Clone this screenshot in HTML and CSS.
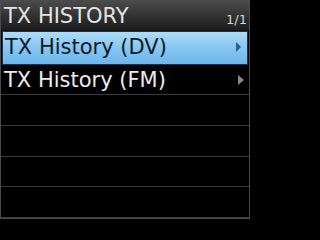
FILE: index.html
```html
<!DOCTYPE html>
<html>
<head>
<meta charset="utf-8">
<link rel="stylesheet" href="styles.css">
</head>
<body>
<div class="screen">
  <div class="header">
    <span class="title">TX HISTORY</span>
    <span class="page">1/1</span>
  </div>
  <div class="list">
    <div class="row selected"><span class="label">TX History (DV)</span><span class="arrow"></span></div>
    <div class="row"><span class="label">TX History (FM)</span><span class="arrow"></span></div>
    <div class="row"></div>
    <div class="row"></div>
    <div class="row"></div>
    <div class="row"></div>
  </div>
</div>
</body>
</html>
```
FILE: styles.css
```css
html, body {
  margin: 0;
  padding: 0;
  background: #000;
}
.screen {
  width: 250px;
  height: 219px;
  box-sizing: border-box;
  border-left: 1px solid #4a4a4a;
  border-right: 1px solid #4a4a4a;
  border-bottom: 1px solid #4a4a4a;
  display: flex;
  flex-direction: column;
  font-family: "DejaVu Sans", sans-serif;
  overflow: hidden;
}
.header {
  height: 31px;
  flex: none;
  box-sizing: border-box;
  background: linear-gradient(#4c4c4c, #2a2a2a 70%, #1c1c1c);
  border-bottom: 1px solid #111;
  display: flex;
  align-items: flex-end;
  justify-content: space-between;
  padding: 0 2px 2px 3px;
}
.title {
  color: #e4e4e4;
  font-size: 21px;
  line-height: 24px;
}
.page {
  color: #d4d4d4;
  font-size: 13px;
  line-height: 14px;
  margin-bottom: 1px;
}
.list {
  flex: 1;
  display: flex;
  flex-direction: column;
}
.row {
  flex: 1;
  box-sizing: border-box;
  border-bottom: 1px solid #3a3a3a;
  display: flex;
  align-items: center;
  justify-content: space-between;
  padding: 0 5px 0 3px;
}
.row.selected {
  margin: 0 1px;
  border: 1px solid #173656;
  background: linear-gradient(#aedcfa, #86c6f2 50%, #6cb6ec);
  padding: 0 6px 2px 2px;
}
.label {
  color: #ececec;
  font-size: 21px;
  line-height: 24px;
}
.selected .label {
  color: #0c1a28;
}
.arrow {
  width: 0;
  height: 0;
  border-top: 5.5px solid transparent;
  border-bottom: 5.5px solid transparent;
  border-left: 6px solid #8a8a8a;
}
.selected .arrow {
  border-top-width: 5px;
  border-bottom-width: 5px;
  border-left: 5px solid #2c5d8c;
}
```
